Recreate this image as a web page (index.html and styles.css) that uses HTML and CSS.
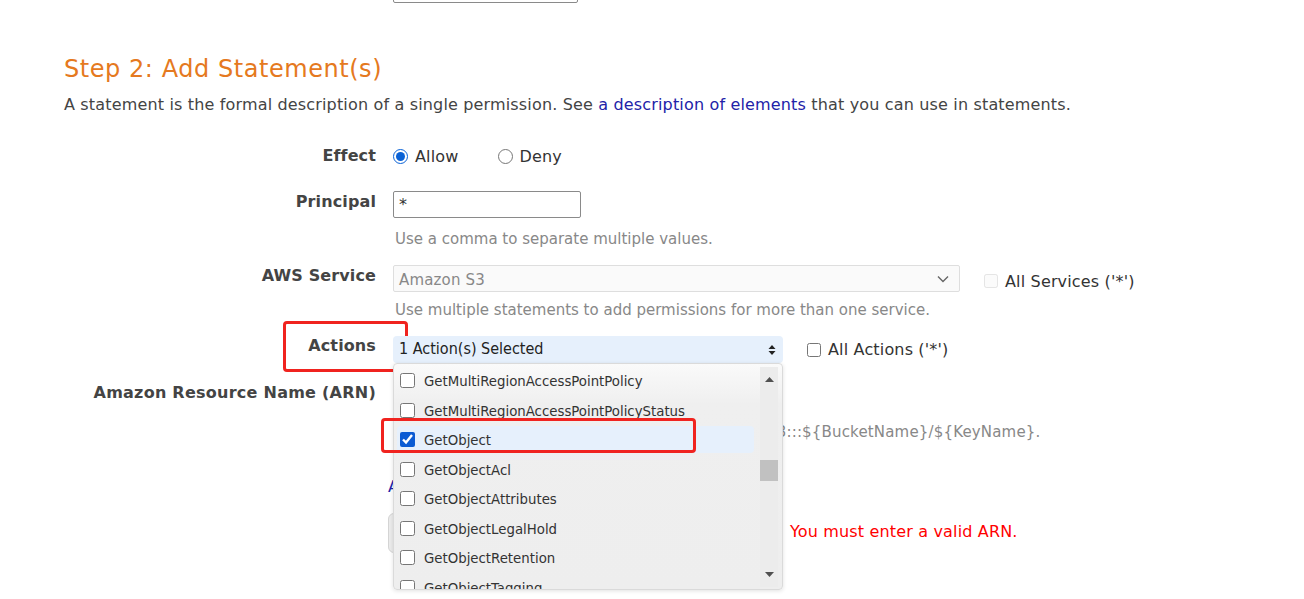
FILE: index.html
```html
<!DOCTYPE html>
<html>
<head>
<meta charset="utf-8">
<title>AWS Policy Generator</title>
<link rel="stylesheet" href="styles.css">
</head>
<body>
<div class="page">
  <div class="row prev-row">
    <div class="label"></div>
    <div class="control"><input class="text prev-input" value="S3 Bucket Policy"></div>
  </div>

  <h2 class="step-title">Step 2: Add Statement(s)</h2>
  <p class="intro">A statement is the formal description of a single permission. See <a href="#" class="link">a description of elements</a> that you can use in statements.</p>

  <div class="row effect-row">
    <div class="label">Effect</div>
    <div class="control radios">
      <label class="opt"><input type="radio" name="effect" checked><span>Allow</span></label>
      <label class="opt deny"><input type="radio" name="effect"><span>Deny</span></label>
    </div>
  </div>

  <div class="row principal-row">
    <div class="label">Principal</div>
    <div class="control">
      <input class="text principal-input" value="*">
      <div class="help help-principal">Use a comma to separate multiple values.</div>
    </div>
  </div>

  <div class="row service-row">
    <div class="label">AWS Service</div>
    <div class="control">
      <div class="inline">
        <div class="select disabled">
          <span>Amazon S3</span>
          <svg class="chev" width="12" height="8" viewBox="0 0 12 8"><path d="M1 1.5 L6 6.5 L11 1.5" fill="none" stroke="#666" stroke-width="1.4"/></svg>
        </div>
        <label class="check-opt muted"><input type="checkbox" disabled><span>All Services ('*')</span></label>
      </div>
      <div class="help help-service">Use multiple statements to add permissions for more than one service.</div>
    </div>
  </div>

  <div class="row actions-row">
    <div class="label actions-label">Actions</div>
    <div class="control">
      <div class="inline">
        <div class="actions-wrap">
          <div class="actions-btn">
            <span>1 Action(s) Selected</span>
            <svg width="8" height="12" viewBox="0 0 8 12"><path d="M4 1 L7.5 5 H0.5 Z M4 11 L7.5 7 H0.5 Z" fill="#222"/></svg>
          </div>
          <div class="dropdown">
            <ul class="items">
              <li class="item"><input type="checkbox"><span>GetMultiRegionAccessPointPolicy</span></li>
              <li class="item"><input type="checkbox"><span>GetMultiRegionAccessPointPolicyStatus</span></li>
              <li class="item selected"><input type="checkbox" checked><span>GetObject</span></li>
              <li class="item"><input type="checkbox"><span>GetObjectAcl</span></li>
              <li class="item"><input type="checkbox"><span>GetObjectAttributes</span></li>
              <li class="item"><input type="checkbox"><span>GetObjectLegalHold</span></li>
              <li class="item"><input type="checkbox"><span>GetObjectRetention</span></li>
              <li class="item"><input type="checkbox"><span>GetObjectTagging</span></li>
            </ul>
            <div class="scrollbar">
              <svg class="arrow" width="9" height="5" viewBox="0 0 9 5"><path d="M0 5 L4.5 0 L9 5 Z" fill="#505050"/></svg>
              <div class="track"><div class="thumb"></div></div>
              <svg class="arrow" width="9" height="5" viewBox="0 0 9 5"><path d="M0 0 L4.5 5 L9 0 Z" fill="#505050"/></svg>
            </div>
          </div>
          <div class="hl-box"></div>
        </div>
        <label class="check-opt"><input type="checkbox"><span>All Actions ('*')</span></label>
      </div>
    </div>
  </div>

  <div class="row arn-row">
    <div class="label">Amazon Resource Name (ARN)</div>
    <div class="control">
      <input class="text arn-input" value="">
      <div class="help help-arn">ARN should follow the following format: arn:aws:s3:::${BucketName}/${KeyName}.</div>
      <a href="#" class="link cond-link">Add Conditions (Optional)</a>
      <div class="submit-line">
        <button class="add-btn" type="button">Add Statement</button>
        <span class="error">You must enter a valid ARN.</span>
      </div>
    </div>
  </div>
</div>
</body>
</html>
```
FILE: styles.css
```css
* { box-sizing: border-box; }
html, body { margin: 0; padding: 0; background: #fff; }
body {
  font-family: "DejaVu Sans", sans-serif;
  font-size: 16px;
  letter-spacing: 0.16px;
  color: #444;
  overflow: hidden;
  height: 599px;
}
.page { padding-left: 64px; }

.row {
  display: grid;
  grid-template-columns: 312px 1fr;
  column-gap: 17px;
}
.label {
  text-align: right;
  font-weight: bold;
  line-height: 20px;
  color: #444;
  letter-spacing: 0.12px;
}
.control { position: relative; }

.text {
  font: inherit;
  height: 27px;
  border: 1px solid #8a8a8a;
  border-radius: 2px;
  padding: 0 5px;
  color: #333;
  background: #fff;
}
.prev-row { margin-top: -24px; }
.prev-input { width: 185px; color: #fff; }

.step-title {
  margin: 51px 0 0;
  font-weight: normal;
  font-size: 24px;
  line-height: 30px;
  letter-spacing: 0.55px;
  color: #e57920;
}
.intro {
  margin: 11px 0 0;
  line-height: 20px;
  color: #444;
}
.link { color: #2222a8; text-decoration: none; }

.effect-row { margin-top: 30px; }
.effect-row .label { line-height: 22px; }
.radios { display: flex; align-items: center; height: 22px; }
.opt { display: inline-flex; align-items: center; gap: 7px; color: #333; }
.opt input { margin: 0; width: 15px; height: 15px; accent-color: #0a62d6; }
.deny { margin-left: 39px; }

.principal-row { margin-top: 24px; }
.principal-row .label { padding-top: 1px; }
.principal-input { width: 188px; }
.help { color: #888; font-size: 15px; letter-spacing: 0; line-height: 20px; padding-left: 2px; }
.help-principal { margin-top: 11px; }

.service-row { margin-top: 16px; }
.service-row .label { padding-top: 1px; }
.inline { display: flex; align-items: center; }
.select {
  width: 567px;
  height: 27px;
  display: flex;
  align-items: center;
  justify-content: space-between;
  padding: 3px 5px 0 5px;
  border: 1px solid #dedede;
  border-radius: 2px;
  font-size: 15px;
}
.select.disabled { background: #fafafa; color: #888; }
.select .chev { margin-right: 5px; margin-top: -3px; }
.check-opt { display: inline-flex; align-items: center; gap: 7px; margin-left: 24px; color: #333; }
.check-opt input { margin: 0; width: 14px; height: 14px; }
.service-row .check-opt { padding-top: 5px; }
.check-opt.muted input { opacity: 0.55; }
.help-service { margin-top: 8px; }

.actions-row { margin-top: 16px; }
.actions-label { position: relative; }
.actions-label::after {
  content: "";
  position: absolute;
  right: -32px;
  top: -15px;
  width: 119px;
  height: 45px;
  border: 3px solid #f0231f;
  border-radius: 4px;
}
.actions-wrap { position: relative; width: 390px; }
.actions-btn {
  height: 27px;
  background: #e6f0fc;
  border-radius: 4px;
  display: flex;
  align-items: center;
  justify-content: space-between;
  padding: 0 7px 0 6px;
  color: #222;
  font-family: "DejaVu Sans Condensed", "DejaVu Sans", sans-serif;
  letter-spacing: 0;
}
.actions-btn span { margin-top: -2px; }
.dropdown {
  position: absolute;
  left: 0;
  top: 27px;
  width: 390px;
  height: 227px;
  background: linear-gradient(#fafafa, #efefef 40px, #eeeeee);
  border: 1px solid #dadada;
  border-radius: 4px;
  box-shadow: 0 1px 4px rgba(0,0,0,0.12);
  overflow: hidden;
  z-index: 5;
  display: flex;
}
.items {
  list-style: none;
  margin: 0;
  padding: 2px 0 0 3px;
  width: 360px;
}
.item {
  height: 29.5px;
  display: flex;
  align-items: center;
  gap: 9px;
  padding-left: 3px;
  color: #333;
  white-space: nowrap;
  border-radius: 4px;
  font-family: "DejaVu Sans Condensed", "DejaVu Sans", sans-serif;
  font-size: 14.8px;
  letter-spacing: 0;
}
.item input { margin: 0; width: 15px; height: 15px; accent-color: #0b5bd3; flex: none; }
.item.selected { background: #e6f0fc; height: 27px; margin: 1px 0 1.5px; }
.scrollbar {
  width: 18px;
  margin-left: 6px;
  margin-top: 3px;
  display: flex;
  flex-direction: column;
  align-items: center;
  background: #ececec;
  height: 220px;
}
.scrollbar .arrow { margin: 10px 0; flex: none; }
.scrollbar .track { flex: 1; width: 100%; position: relative; }
.thumb { position: absolute; left: 0; right: 0; top: 68px; height: 21px; background: #c1c1c1; }
.hl-box {
  position: absolute;
  left: -12px;
  top: 82px;
  width: 315px;
  height: 35px;
  border: 3px solid #f0231f;
  border-radius: 4px;
  z-index: 6;
}

.arn-row { margin-top: 19px; }
.arn-row .label { padding-top: 1px; letter-spacing: 0.25px; }
.arn-input { width: 390px; }
.help-arn { margin-top: 13px; white-space: nowrap; letter-spacing: 0.17px; }
.cond-link { display: block; margin: 35px 0 0 -5px; line-height: 20px; }
.submit-line { display: flex; align-items: center; margin: 16px 0 0 -5px; }
.add-btn {
  font: inherit;
  width: 385px;
  height: 40px;
  background: #ebebeb;
  border: 1px solid #d4d4d4;
  border-radius: 6px;
  color: #333;
}
.error { color: #f00; margin-left: 17px; margin-bottom: 3px; }
```
